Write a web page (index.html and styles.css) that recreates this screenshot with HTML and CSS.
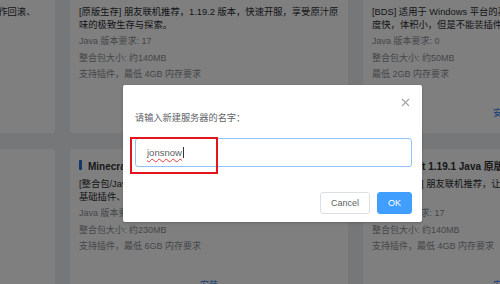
FILE: index.html
```html
<!DOCTYPE html>
<html lang="zh-CN">
<head>
<meta charset="utf-8">
<title>新建服务器</title>
<link rel="stylesheet" href="styles.css">
</head>
<body>
<div class="page">
  <div class="grid">
    <div class="card">
      <div class="title"><span class="bar"></span>Minecraft 插件服</div>
      <div class="desc">[插件服] 适合联机的插件服务端，支持领地保护、操作回滚、<br>多世界等功能。</div>
      <div class="meta">Java 版本要求: 17</div>
      <div class="meta">整合包大小: 约90MB</div>
      <div class="meta">支持插件</div>
      <div class="foot"><a class="link">安装</a></div>
    </div>
    <div class="card">
      <div class="title"><span class="bar"></span>Minecraft 1.19.2 Java 原版服务器</div>
      <div class="desc">[原版生存] 朋友联机推荐，1.19.2 版本，快速开服，享受原汁原<br>味的极致生存与探索。</div>
      <div class="meta">Java 版本要求: 17</div>
      <div class="meta">整合包大小: 约140MB</div>
      <div class="meta">支持插件，最低 4GB 内存要求</div>
      <div class="foot"><a class="link">安装</a></div>
    </div>
    <div class="card">
      <div class="title"><span class="bar"></span>Minecraft 基岩版服务器</div>
      <div class="desc">[BDS] 适用于 Windows 平台的基岩版服务端，运行速<br>度快，体积小，但是不能装插件。</div>
      <div class="meta">Java 版本要求: 0</div>
      <div class="meta">整合包大小: 约50MB</div>
      <div class="meta">最低 2GB 内存要求</div>
      <div class="foot"><a class="link">安装</a></div>
    </div>
    <div class="card">
      <div class="title"><span class="bar"></span>Minecraft 互通服</div>
      <div class="desc">[互通服] 支持 Java 版和基岩版玩家同服，互通基岩<br>版，内置领地、经济、商店等基础<br>插件。</div>
      <div class="meta">Java 版本要求: 17</div>
      <div class="meta">整合包大小: 约180MB</div>
      <div class="meta">支持插件</div>
      <div class="foot"><a class="link">安装</a></div>
    </div>
    <div class="card">
      <div class="title"><span class="bar"></span>Minecraft 1.18.2 Java 整合包服务器</div>
      <div class="desc">[整合包/Java 版] 已预装常用插件，开箱即用，包含<br>基础插件、领地与经济系统。</div>
      <div class="meta">Java 版本要求: 17</div>
      <div class="meta">整合包大小: 约230MB</div>
      <div class="meta">支持插件，最低 6GB 内存要求</div>
      <div class="foot"><a class="link">安装</a></div>
    </div>
    <div class="card">
      <div class="title"><span class="bar"></span>Minecraft 1.19.1 Java 原版服务器</div>
      <div class="desc">[原版生存服] 朋友联机推荐，让你体验原汁原味的<br>生存。</div>
      <div class="meta">Java 版本要求: 17</div>
      <div class="meta">整合包大小: 约140MB</div>
      <div class="meta">支持插件，最低 4GB 内存要求</div>
      <div class="foot"><a class="link">安装</a></div>
    </div>
  </div>
</div>

<div class="overlay">
  <div class="dialog">
    <div class="dialog-head">
      <button class="close" aria-label="关闭">
        <svg width="9" height="9" viewBox="0 0 9 9"><path d="M1 1L8 8M8 1L1 8" stroke="#a0a3a8" stroke-width="1.1" fill="none"/></svg>
      </button>
    </div>
    <div class="label">请输入新建服务器的名字：</div>
    <div class="input"><span class="typed">jonsnow</span><span class="caret"></span></div>
    <div class="dialog-foot">
      <button class="btn">Cancel</button>
      <button class="btn primary">OK</button>
    </div>
    <div class="mark"></div>
  </div>
</div>
</body>
</html>
```

FILE: styles.css
```css
html, body {
  margin: 0;
  padding: 0;
}
body {
  width: 500px;
  height: 284px;
  overflow: hidden;
  background: #eceef1;
  font-family: "Liberation Sans", "Noto Sans CJK SC", sans-serif;
  font-size: 9px;
  position: relative;
}
.page {
  overflow: hidden;
  height: 284px;
}
.grid {
  display: grid;
  grid-template-columns: 278px 278px 278px;
  grid-auto-rows: 156px;
  column-gap: 15px;
  row-gap: 16px;
  margin-left: -223px;
  margin-top: -23px;
}
.card {
  background: #fff;
  border-radius: 3px;
  padding: 9px 9px 13px;
  display: flex;
  flex-direction: column;
  overflow: hidden;
  box-sizing: border-box;
}
.title {
  display: flex;
  align-items: center;
  height: 14px;
  font-size: 10px;
  font-weight: bold;
  color: #303133;
  white-space: nowrap;
}
.bar {
  width: 3px;
  height: 10px;
  background: #1f6fd6;
  border-radius: 1px;
  margin-right: 6px;
}
.desc {
  margin-top: 6px;
  line-height: 13px;
  font-size: 9.3px;
  color: #2b2d30;
  white-space: nowrap;
  height: 26px;
  overflow: hidden;
}
.meta {
  line-height: 16.5px;
  color: #8a8d93;
  white-space: nowrap;
}
.desc + .meta {
  margin-top: 1px;
}
.foot {
  margin-top: auto;
  text-align: center;
  line-height: 14px;
}
.link {
  color: #2d7ff0;
}

.overlay {
  position: absolute;
  inset: 0;
  background: rgba(0, 0, 0, 0.5);
  padding: 85px 0 0 123px;
  box-sizing: border-box;
}
.dialog {
  position: relative;
  width: 299px;
  background: #fff;
  border-radius: 2px;
  padding: 0 10px 8px 12px;
  box-sizing: border-box;
  box-shadow: 0 1px 3px rgba(0,0,0,0.2);
}
.dialog-head {
  display: flex;
  justify-content: flex-end;
  padding-top: 12px;
  padding-right: 2px;
}
.close {
  width: 10px;
  height: 10px;
  padding: 0;
  border: 0;
  background: none;
  display: flex;
  align-items: center;
  justify-content: center;
}
.label {
  margin-top: 5px;
  line-height: 12px;
  font-size: 9.2px;
  color: #606266;
}
.input {
  margin-top: 14px;
  height: 29px;
  box-sizing: border-box;
  border: 1px solid #8fc3fb;
  border-radius: 3px;
  padding-left: 11px;
  display: flex;
  align-items: center;
  color: #606266;
  font-size: 9.5px;
}
.typed {
  text-decoration: underline wavy #e2403a;
  text-decoration-thickness: 1px;
  text-underline-offset: 2px;
}
.caret {
  width: 0;
  height: 11px;
  border-left: 1px solid #333;
  margin-left: 1px;
}
.dialog-foot {
  margin-top: 25px;
  display: flex;
  justify-content: flex-end;
  gap: 7px;
}
.btn {
  height: 22px;
  border-radius: 3px;
  font-family: "Liberation Sans", "Noto Sans CJK SC", sans-serif;
  font-size: 9px;
  padding: 0;
  border: 1px solid #dcdfe6;
  background: #fff;
  color: #606266;
  width: 50px;
}
.btn.primary {
  width: 35px;
  background: #409eff;
  border-color: #409eff;
  color: #fff;
}
.mark {
  position: absolute;
  left: 7px;
  top: 52px;
  width: 88px;
  height: 37px;
  box-sizing: border-box;
  border: 2px solid #e3141c;
}
```
